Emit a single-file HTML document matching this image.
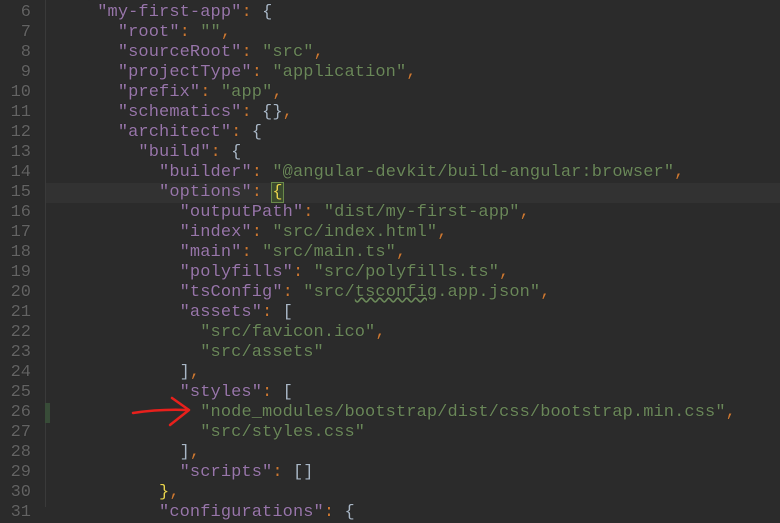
<!DOCTYPE html>
<html><head><meta charset="utf-8"><style>
html,body{margin:0;padding:0;}
body{width:780px;height:507px;background:#2b2b2b;overflow:hidden;position:relative;font-family:"Liberation Mono",monospace;font-size:17px;letter-spacing:0.1px;}
.gut{position:absolute;left:0;top:0;width:45px;height:507px;background:#2b2b2b;}
.gl{position:absolute;left:45px;top:0;width:1px;height:507px;background:#3a3a3a;}
.hl{position:absolute;left:46px;top:183px;width:734px;height:20px;background:#323232;}
.row{position:absolute;left:0;height:20px;line-height:20px;white-space:pre;width:780px;text-shadow:0 0 1px rgba(0,0,0,0.4);}
.n{position:absolute;right:749px;color:#636363;text-align:right;letter-spacing:0;}
.c{position:absolute;left:56px;color:#a9b7c6;}
.k{color:#9876aa}.s{color:#6a8759}.p{color:#cc7832}
.br{outline:1px solid #6a8a4a;background:#3b4a2e;color:#e8d44d}
.sq{text-decoration:underline wavy #6a8759;}
</style></head><body>
<div class="gut"></div><div class="hl"></div><div class="gl"></div>
<div style="position:absolute;left:45px;top:403px;width:5px;height:20px;background:#384c38"></div>
<div class="row" style="top:-17px"><span class="n">5</span><span class="c">  <span class="k">"projects"</span><span class="p">:</span> {</span></div>
<div class="row" style="top:3px"><span class="n">6</span><span class="c">    <span class="k">"my-first-app"</span><span class="p">:</span> {</span></div>
<div class="row" style="top:23px"><span class="n">7</span><span class="c">      <span class="k">"root"</span><span class="p">:</span> <span class="s">""</span><span class="p">,</span></span></div>
<div class="row" style="top:43px"><span class="n">8</span><span class="c">      <span class="k">"sourceRoot"</span><span class="p">:</span> <span class="s">"src"</span><span class="p">,</span></span></div>
<div class="row" style="top:63px"><span class="n">9</span><span class="c">      <span class="k">"projectType"</span><span class="p">:</span> <span class="s">"application"</span><span class="p">,</span></span></div>
<div class="row" style="top:83px"><span class="n">10</span><span class="c">      <span class="k">"prefix"</span><span class="p">:</span> <span class="s">"app"</span><span class="p">,</span></span></div>
<div class="row" style="top:103px"><span class="n">11</span><span class="c">      <span class="k">"schematics"</span><span class="p">:</span> {}<span class="p">,</span></span></div>
<div class="row" style="top:123px"><span class="n">12</span><span class="c">      <span class="k">"architect"</span><span class="p">:</span> {</span></div>
<div class="row" style="top:143px"><span class="n">13</span><span class="c">        <span class="k">"build"</span><span class="p">:</span> {</span></div>
<div class="row" style="top:163px"><span class="n">14</span><span class="c">          <span class="k">"builder"</span><span class="p">:</span> <span class="s">"@angular-devkit/build-angular:browser"</span><span class="p">,</span></span></div>
<div class="row" style="top:183px"><span class="n">15</span><span class="c">          <span class="k">"options"</span><span class="p">:</span> <span class="br">{</span></span></div>
<div class="row" style="top:203px"><span class="n">16</span><span class="c">            <span class="k">"outputPath"</span><span class="p">:</span> <span class="s">"dist/my-first-app"</span><span class="p">,</span></span></div>
<div class="row" style="top:223px"><span class="n">17</span><span class="c">            <span class="k">"index"</span><span class="p">:</span> <span class="s">"src/index.html"</span><span class="p">,</span></span></div>
<div class="row" style="top:243px"><span class="n">18</span><span class="c">            <span class="k">"main"</span><span class="p">:</span> <span class="s">"src/main.ts"</span><span class="p">,</span></span></div>
<div class="row" style="top:263px"><span class="n">19</span><span class="c">            <span class="k">"polyfills"</span><span class="p">:</span> <span class="s">"src/polyfills.ts"</span><span class="p">,</span></span></div>
<div class="row" style="top:283px"><span class="n">20</span><span class="c">            <span class="k">"tsConfig"</span><span class="p">:</span> <span class="s">"src/<span class="sq">tsconfig</span>.app.json"</span><span class="p">,</span></span></div>
<div class="row" style="top:303px"><span class="n">21</span><span class="c">            <span class="k">"assets"</span><span class="p">:</span> [</span></div>
<div class="row" style="top:323px"><span class="n">22</span><span class="c">              <span class="s">"src/favicon.ico"</span><span class="p">,</span></span></div>
<div class="row" style="top:343px"><span class="n">23</span><span class="c">              <span class="s">"src/assets"</span></span></div>
<div class="row" style="top:363px"><span class="n">24</span><span class="c">            ]<span class="p">,</span></span></div>
<div class="row" style="top:383px"><span class="n">25</span><span class="c">            <span class="k">"styles"</span><span class="p">:</span> [</span></div>
<div class="row" style="top:403px"><span class="n">26</span><span class="c">              <span class="s">"node_modules/bootstrap/dist/css/bootstrap.min.css"</span><span class="p">,</span></span></div>
<div class="row" style="top:423px"><span class="n">27</span><span class="c">              <span class="s">"src/styles.css"</span></span></div>
<div class="row" style="top:443px"><span class="n">28</span><span class="c">            ]<span class="p">,</span></span></div>
<div class="row" style="top:463px"><span class="n">29</span><span class="c">            <span class="k">"scripts"</span><span class="p">:</span> []</span></div>
<div class="row" style="top:483px"><span class="n">30</span><span class="c">          <span style="color:#e8d44d">}</span><span class="p">,</span></span></div>
<div class="row" style="top:503px"><span class="n">31</span><span class="c">          <span class="k">"configurations"</span><span class="p">:</span> {</span></div>
<svg style="position:absolute;left:0;top:0" width="780" height="507">
<path d="M133 413 Q160 409 186 410" stroke="#e8201c" stroke-width="2.5" fill="none" stroke-linecap="round"/>
<path d="M172 398 L189 410 L170 425" stroke="#e8201c" stroke-width="2.5" fill="none" stroke-linecap="round" stroke-linejoin="round"/>
</svg>
</body></html>
